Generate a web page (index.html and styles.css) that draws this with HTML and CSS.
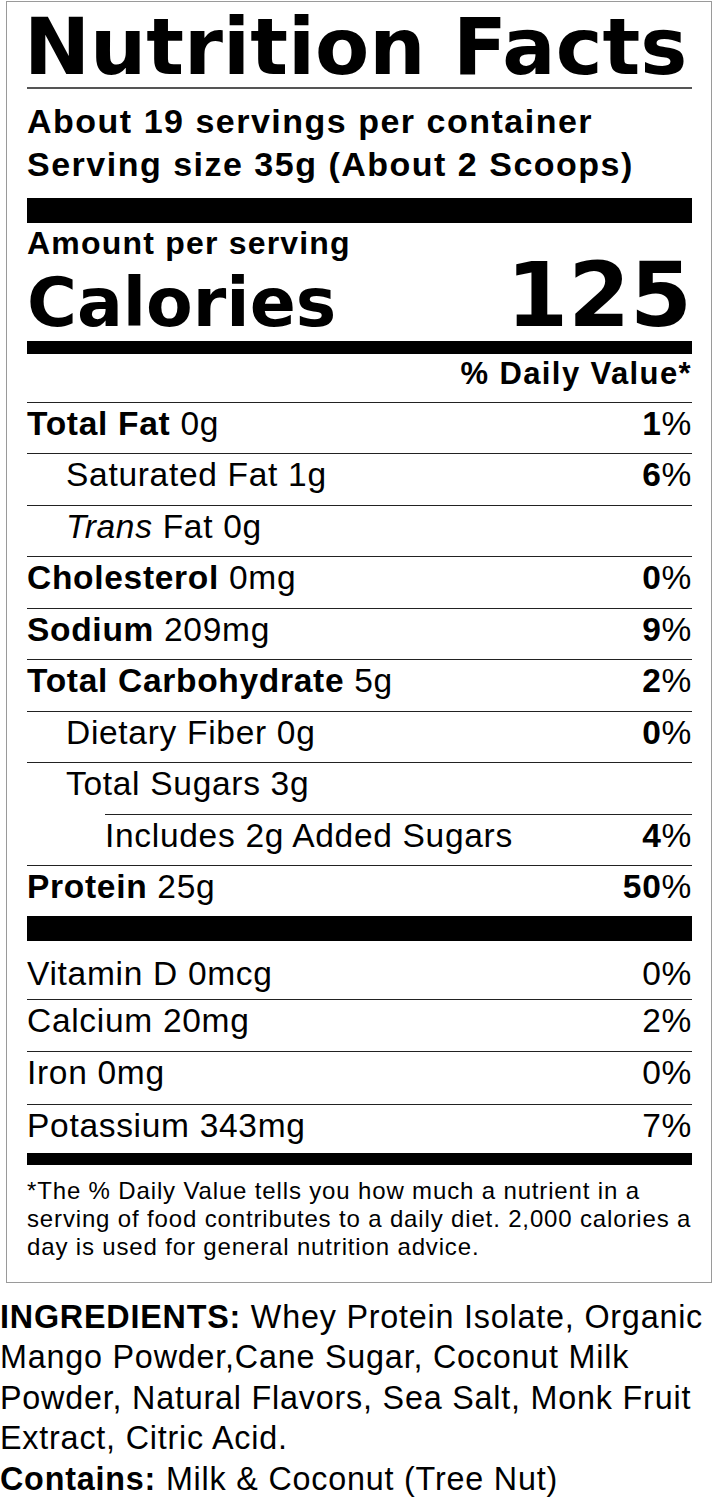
FILE: index.html
```html
<!DOCTYPE html>
<html lang="en">
<head>
<meta charset="utf-8">
<title>Nutrition Facts</title>
<link rel="stylesheet" href="styles.css">
</head>
<body>
<div class="label">
  <h1 class="title">Nutrition Facts</h1>
  <div class="servings">
    <p>About 19 servings per container</p>
    <p>Serving size 35g (About 2 Scoops)</p>
  </div>
  <div class="bar bar-thick"></div>
  <p class="amount">Amount per serving</p>
  <div class="calories">
    <span class="cal-label">Calories</span>
    <span class="cal-value">125</span>
  </div>
  <div class="bar bar-medium"></div>
  <p class="dv-head">% Daily Value*</p>
  <div class="rows">
    <div class="row"><span><b>Total Fat</b> 0g</span><span><b>1</b>%</span></div>
    <div class="row"><span class="indent1">Saturated Fat 1g</span><span><b>6</b>%</span></div>
    <div class="row"><span class="indent1"><i>Trans</i> Fat 0g</span><span></span></div>
    <div class="row"><span><b>Cholesterol</b> 0mg</span><span><b>0</b>%</span></div>
    <div class="row"><span><b>Sodium</b> 209mg</span><span><b>9</b>%</span></div>
    <div class="row"><span><b>Total Carbohydrate</b> 5g</span><span><b>2</b>%</span></div>
    <div class="row"><span class="indent1">Dietary Fiber 0g</span><span><b>0</b>%</span></div>
    <div class="row"><span class="indent1">Total Sugars 3g</span><span></span></div>
    <div class="row row-sub"><span>Includes 2g Added Sugars</span><span><b>4</b>%</span></div>
    <div class="row row-last"><span><b>Protein</b> 25g</span><span><b>50</b>%</span></div>
  </div>
  <div class="bar bar-thick"></div>
  <div class="vitamins">
    <div class="row vit-first"><span>Vitamin D 0mcg</span><span>0%</span></div>
    <div class="row"><span>Calcium 20mg</span><span>2%</span></div>
    <div class="row"><span>Iron 0mg</span><span>0%</span></div>
    <div class="row vit-last"><span>Potassium 343mg</span><span>7%</span></div>
  </div>
  <div class="bar bar-small"></div>
  <p class="footnote">*The % Daily Value tells you how much a nutrient in a<br>serving of food contributes to a daily diet. 2,000 calories a<br>day is used for general nutrition advice.</p>
</div>
<p class="ingredients"><b>INGREDIENTS:</b> Whey Protein Isolate, Organic<br>Mango Powder,Cane Sugar, Coconut Milk<br>Powder, Natural Flavors, Sea Salt, Monk Fruit<br>Extract, Citric Acid.<br><b>Contains:</b> Milk &amp; Coconut (Tree Nut)</p>
</body>
</html>
```

FILE: styles.css
```css
* {
  box-sizing: border-box;
  margin: 0;
  padding: 0;
}

body {
  margin: 0;
  background: #fff;
  color: #000;
  font-family: "Liberation Sans", Arial, sans-serif;
}

.label {
  margin: 1px 0 0 6px;
  width: 706px;
  border: 1px solid #9a9a9a;
  padding: 0 19px 20.3px 20px;
}

.title {
  font-family: "DejaVu Sans", sans-serif;
  font-weight: bold;
  font-size: 79px;
  line-height: 80px;
  padding: 5px 0 0;
  text-indent: -3px;
  white-space: nowrap;
  border-bottom: 2px solid #555;
}

.servings {
  padding-top: 10.7px;
  font-weight: bold;
  font-size: 34px;
  line-height: 43px;
  letter-spacing: 1.5px;
  white-space: nowrap;
}

.bar {
  background: #000;
}

.bar-thick {
  height: 25px;
  margin-top: 12.3px;
}

.rows + .bar-thick {
  margin-top: 0;
}

.bar-medium {
  height: 13px;
  margin-top: 10px;
}

.bar-small {
  height: 12px;
}

.amount {
  margin-top: 3px;
  font-weight: bold;
  font-size: 32px;
  line-height: 34px;
  letter-spacing: 1.2px;
}

.calories {
  display: flex;
  justify-content: space-between;
  align-items: baseline;
  font-family: "DejaVu Sans", sans-serif;
  font-weight: bold;
}

.cal-label {
  font-size: 68px;
  line-height: 56px;
}

.cal-value {
  font-size: 89px;
  line-height: 70px;
}

.dv-head {
  margin: 3.3px 0 10.4px;
  text-align: right;
  font-weight: bold;
  font-size: 31px;
  line-height: 34px;
  letter-spacing: 1.4px;
}

.row {
  display: flex;
  justify-content: space-between;
  border-top: 1px solid #222;
  padding: 1px 0 9.5px;
  font-size: 33.5px;
  line-height: 40px;
  letter-spacing: 0.7px;
  white-space: nowrap;
}

.indent1 {
  padding-left: 39px;
}

.row-sub {
  margin-left: 78px;
}

.row-last {
  padding-bottom: 8.5px;
}

.vit-first {
  border-top: none;
  padding: 13px 0 5px;
}

.vitamins .row {
  padding-bottom: 10.5px;
}

.vitamins .vit-first {
  padding-bottom: 5px;
}

.vitamins .vit-last {
  padding-bottom: 7px;
}

.footnote {
  margin-top: 12.7px;
  font-size: 24px;
  line-height: 28px;
  letter-spacing: 0.85px;
  white-space: nowrap;
}

.ingredients {
  margin-top: 14.3px;
  font-size: 32.3px;
  line-height: 40.5px;
  letter-spacing: 0.8px;
  white-space: nowrap;
}
```
